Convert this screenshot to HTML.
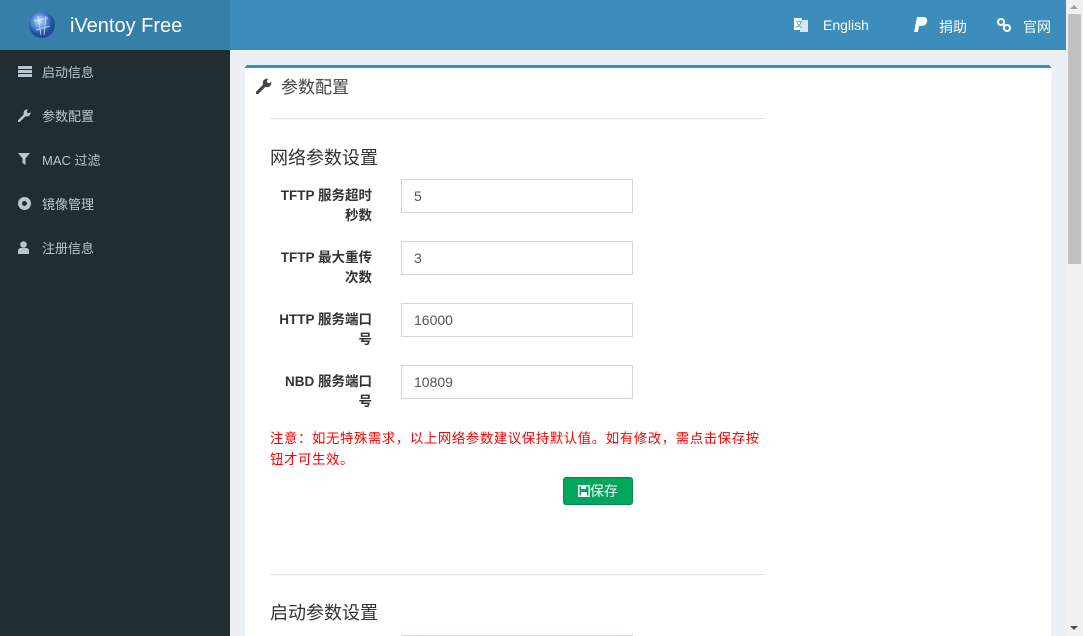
<!DOCTYPE html><html><head><meta charset="utf-8"><style>
*{box-sizing:border-box;margin:0;padding:0}
body{width:1083px;height:636px;overflow:hidden;background:#ecf0f5;font-family:"Liberation Sans","Noto Sans CJK SC",sans-serif;position:relative}
.a{position:absolute}
.hdr{left:0;top:0;width:1066px;height:50px;background:#3c8dbc}
.logo{left:0;top:0;width:230px;height:50px;background:#367fa9;color:#fff;font-size:20px}
.side{left:0;top:50px;width:230px;height:586px;background:#222d32}
.nav{left:42px;color:#b8c7ce;font-size:13px}
.ic{position:absolute;left:18px}
.top{color:#fff;font-size:14px;top:17px}
.lbl{width:110px;left:262px;text-align:right;font-weight:bold;font-size:13.5px;color:#333;line-height:20px}
.inp{left:401px;width:232px;height:34px;border:1px solid #d2d6de;font-size:14px;color:#555;padding:8px 12px;line-height:16px}
.hr{left:270px;width:495px;height:1px;background:#e3e3e3}
</style></head><body>
<div class="a hdr"></div>
<div class="a logo">
<svg class="a" style="left:28px;top:11px" width="28" height="28" viewBox="0 0 28 28"><defs><radialGradient id="g" cx="40%" cy="35%"><stop offset="0" stop-color="#cfe4ff"/><stop offset=".6" stop-color="#4f86d6"/><stop offset="1" stop-color="#1d4d9c"/></radialGradient></defs><circle cx="14" cy="14" r="13" fill="url(#g)"/><path d="M6 10 L20 7 M8 19 L22 15 M10 5 L13 24 M18 5 L16 24" stroke="#e8f0ff" stroke-width="1" fill="none" opacity=".7"/></svg>
<div class="a" style="left:70px;top:15px">iVentoy Free</div></div>
<div class="a side"></div>
<svg class="ic" style="top:66px" width="14" height="11"><rect x="0" y="0" width="14" height="3" fill="#b8c7ce"/><rect x="0" y="4" width="14" height="3" fill="#b8c7ce"/><rect x="0" y="8" width="14" height="3" fill="#b8c7ce"/></svg>
<div class="a nav" style="top:62px">启动信息</div>
<svg class="ic" style="top:109px" width="13" height="13" viewBox="0 0 13 13"><path d="M1 12 L7 6" stroke="#b8c7ce" stroke-width="2.5" stroke-linecap="round"/><circle cx="9" cy="4" r="3.5" fill="#b8c7ce"/><circle cx="10.5" cy="2.5" r="1.6" fill="#222d32"/></svg>
<div class="a nav" style="top:106px">参数配置</div>
<svg class="ic" style="top:153px" width="12" height="12"><path d="M0 0 H12 L7.5 5.5 V12 L4.5 10 V5.5Z" fill="#b8c7ce"/></svg>
<div class="a nav" style="top:150px">MAC 过滤</div>
<svg class="ic" style="top:197px" width="13" height="13"><circle cx="6.5" cy="6.5" r="6.5" fill="#b8c7ce"/><circle cx="6.5" cy="6.5" r="2.5" fill="#222d32"/></svg>
<div class="a nav" style="top:194px">镜像管理</div>
<svg class="ic" style="top:241px" width="11" height="13"><circle cx="5.5" cy="3.5" r="3.3" fill="#b8c7ce"/><path d="M0 13 V10 Q0 7 3 7 H8 Q11 7 11 10 V13Z" fill="#b8c7ce"/></svg>
<div class="a nav" style="top:238px">注册信息</div>
<svg class="a" style="left:794px;top:17px" width="14" height="15"><rect x="0" y="1" width="8" height="12" fill="#fff"/><rect x="6" y="3" width="8" height="12" fill="#d8e8f4"/><text x="1" y="10" font-size="8" fill="#3c8dbc">文</text></svg>
<div class="a top" style="left:823px">English</div>
<svg class="a" style="left:914px;top:17px" width="14" height="16" viewBox="0 0 14 16"><path d="M3 0 H9 Q14 0 13 5 Q12 9 7 9 H5 L4 15 H0Z" fill="#fff"/></svg>
<div class="a top" style="left:939px">捐助</div>
<svg class="a" style="left:997px;top:18px" width="14" height="14"><circle cx="4" cy="4" r="3" stroke="#fff" stroke-width="2" fill="none"/><circle cx="10" cy="10" r="3" stroke="#fff" stroke-width="2" fill="none"/><path d="M5.5 5.5 L8.5 8.5" stroke="#fff" stroke-width="2"/></svg>
<div class="a top" style="left:1023px">官网</div>
<div class="a" style="left:245px;top:65px;width:806px;height:571px;background:#fff;border-top:3px solid #3c8dbc;border-radius:3px 3px 0 0"></div>
<svg class="a" style="left:256px;top:78px" width="16" height="16" viewBox="0 0 13 13"><path d="M1 12 L7 6" stroke="#444" stroke-width="2.5" stroke-linecap="round"/><circle cx="9" cy="4" r="3.5" fill="#444"/><circle cx="10.5" cy="2.5" r="1.6" fill="#fff"/></svg>
<div class="a" style="left:281px;top:73px;font-size:17px;color:#444">参数配置</div>
<div class="a hr" style="top:118px"></div>
<div class="a" style="left:270px;top:144px;font-size:18px;color:#333">网络参数设置</div>
<div class="a lbl" style="top:186px">TFTP 服务超时<br>秒数</div>
<div class="a inp" style="top:179px">5</div>
<div class="a lbl" style="top:248px">TFTP 最大重传<br>次数</div>
<div class="a inp" style="top:241px">3</div>
<div class="a lbl" style="top:310px">HTTP 服务端口<br>号</div>
<div class="a inp" style="top:303px">16000</div>
<div class="a lbl" style="top:372px">NBD 服务端口<br>号</div>
<div class="a inp" style="top:365px">10809</div>
<div class="a" style="left:270px;top:428px;width:520px;font-size:13.4px;letter-spacing:0.6px;line-height:21px;color:#f00;white-space:nowrap">注意：如无特殊需求，以上网络参数建议保持默认值。如有修改，需点击保存按<br>钮才可生效。</div>
<div class="a" style="left:563px;top:477px;width:70px;height:28px;background:#00a65a;border:1px solid #008d4c;border-radius:3px;color:#fff;font-size:14px;line-height:26px;text-align:center"><svg width="12" height="12" style="vertical-align:-1px"><rect x="0.75" y="0.75" width="10.5" height="10.5" fill="none" stroke="#fff" stroke-width="1.5"/><rect x="3" y="1" width="5" height="3" fill="#fff"/><rect x="3" y="7" width="6" height="4" fill="#fff"/></svg>保存</div>
<div class="a hr" style="top:574px"></div>
<div class="a" style="left:270px;top:599px;font-size:18px;color:#333">启动参数设置</div>
<div class="a" style="left:401px;top:635px;width:232px;height:1px;background:#d2d6de"></div>
<div class="a" style="left:1066px;top:0;width:17px;height:636px;background:#f1f1f1"></div>
<div class="a" style="left:1068px;top:14px;width:13px;height:250px;background:#c1c1c1"></div>
<div class="a" style="left:1070px;top:5px;width:0;height:0;border:4px solid transparent;border-bottom-color:#a3a3a3;border-top:0"></div>
<div class="a" style="left:1070px;top:626px;width:0;height:0;border:4px solid transparent;border-top-color:#505050;border-bottom:0"></div>
</body></html>
